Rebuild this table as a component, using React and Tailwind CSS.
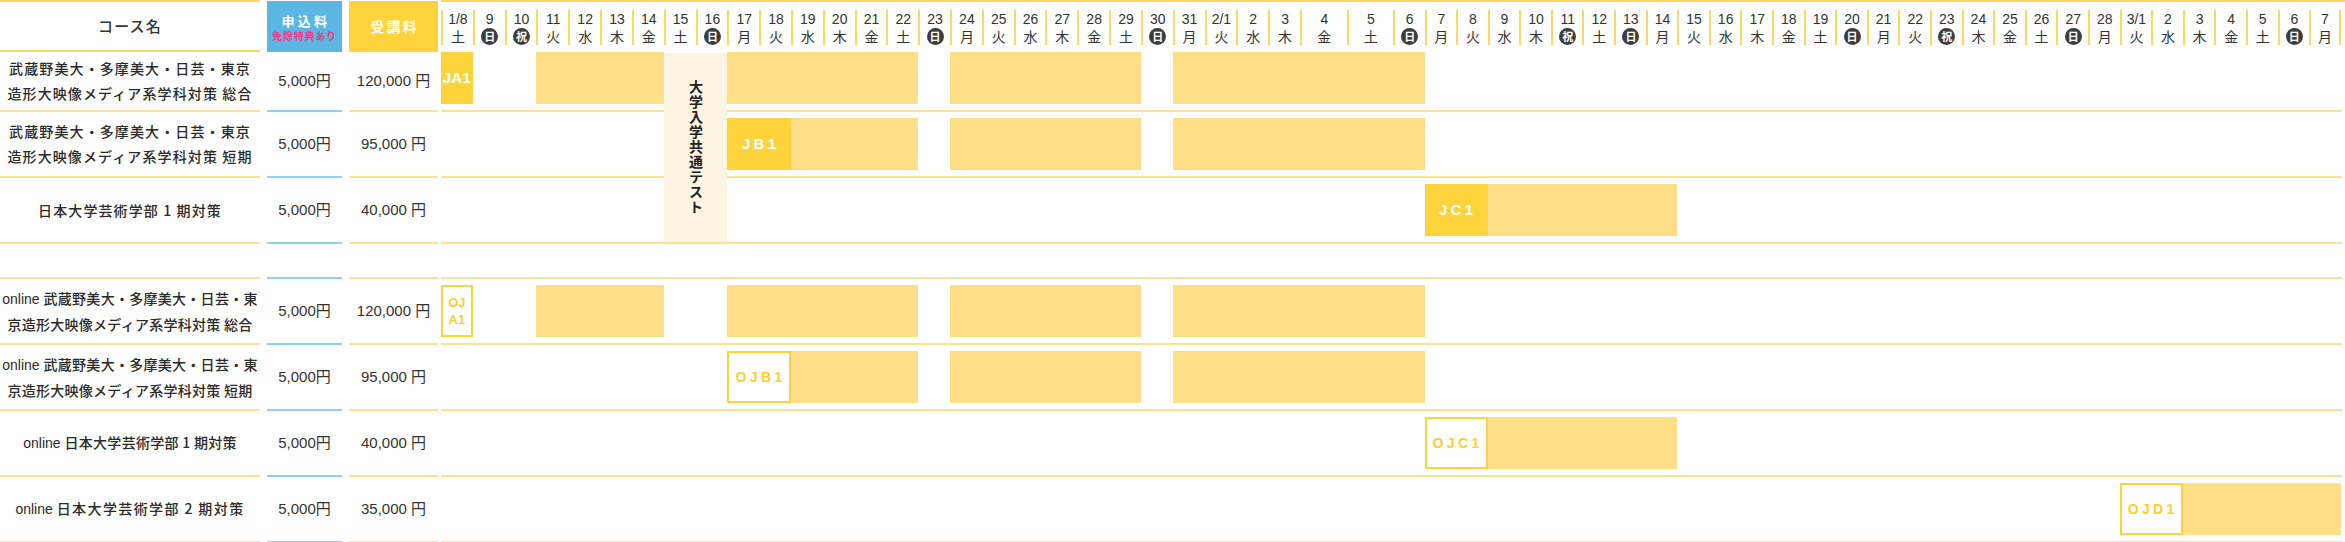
const days = [
  ['1/8', '土'], ['9', '日'], ['10', '祝'], ['11', '火'], ['12', '水'], ['13', '木'], ['14', '金'],
  ['15', '土'], ['16', '日'], ['17', '月'], ['18', '火'], ['19', '水'], ['20', '木'], ['21', '金'],
  ['22', '土'], ['23', '日'], ['24', '月'], ['25', '火'], ['26', '水'], ['27', '木'], ['28', '金'],
  ['29', '土'], ['30', '日'], ['31', '月'], ['2/1', '火'], ['2', '水'], ['3', '木'], ['4', '金'],
  ['5', '土'], ['6', '日'], ['7', '月'], ['8', '火'], ['9', '水'], ['10', '木'], ['11', '祝'],
  ['12', '土'], ['13', '日'], ['14', '月'], ['15', '火'], ['16', '水'], ['17', '木'], ['18', '金'],
  ['19', '土'], ['20', '日'], ['21', '月'], ['22', '火'], ['23', '祝'], ['24', '木'], ['25', '金'],
  ['26', '土'], ['27', '日'], ['28', '月'], ['3/1', '火'], ['2', '水'], ['3', '木'], ['4', '金'],
  ['5', '土'], ['6', '日'], ['7', '月'],
]

const gridCols = 'grid grid-cols-[repeat(27,31.815px)_46.7px_46.3px_repeat(30,31.6px)]'

const longBars = [
  { cls: 'col-start-4 col-end-8' },
  { cls: 'col-start-10 col-end-16' },
  { cls: 'col-start-17 col-end-23' },
  { cls: 'col-start-24 col-end-31' },
]

const rowsA = [
  {
    name: ['武蔵野美大・多摩美大・日芸・東京', '造形大映像メディア系学科対策 総合'],
    entry: '5,000円',
    fee: '120,000 円',
    first: true,
    bars: [{ cls: 'col-start-1 col-end-2', kind: 'solid', label: 'JA1', tight: true }, ...longBars],
  },
  {
    name: ['武蔵野美大・多摩美大・日芸・東京', '造形大映像メディア系学科対策 短期'],
    entry: '5,000円',
    fee: '95,000 円',
    bars: [
      { cls: 'col-start-10 col-end-12', kind: 'solid', label: 'JB1' },
      { cls: 'col-start-12 col-end-16' },
      { cls: 'col-start-17 col-end-23' },
      { cls: 'col-start-24 col-end-31' },
    ],
  },
  {
    name: ['日本大学芸術学部 1 期対策'],
    entry: '5,000円',
    fee: '40,000 円',
    bars: [
      { cls: 'col-start-31 col-end-33', kind: 'solid', label: 'JC1' },
      { cls: 'col-start-33 col-end-39' },
    ],
  },
]

const rowsB = [
  {
    online: true,
    name: ['武蔵野美大・多摩美大・日芸・東', '京造形大映像メディア系学科対策 総合'],
    entry: '5,000円',
    fee: '120,000 円',
    bars: [{ cls: 'col-start-1 col-end-2', kind: 'outline', label: 'OJA1', stacked: true }, ...longBars],
  },
  {
    online: true,
    name: ['武蔵野美大・多摩美大・日芸・東', '京造形大映像メディア系学科対策 短期'],
    entry: '5,000円',
    fee: '95,000 円',
    bars: [
      { cls: 'col-start-10 col-end-12', kind: 'outline', label: 'OJB1' },
      { cls: 'col-start-12 col-end-16' },
      { cls: 'col-start-17 col-end-23' },
      { cls: 'col-start-24 col-end-31' },
    ],
  },
  {
    online: true,
    name: ['日本大学芸術学部 1 期対策'],
    entry: '5,000円',
    fee: '40,000 円',
    bars: [
      { cls: 'col-start-31 col-end-33', kind: 'outline', label: 'OJC1' },
      { cls: 'col-start-33 col-end-39' },
    ],
  },
  {
    online: true,
    name: ['日本大学芸術学部 2 期対策'],
    entry: '5,000円',
    fee: '35,000 円',
    wide: true,
    bars: [
      { cls: 'col-start-53 col-end-55', kind: 'outline', label: 'OJD1' },
      { cls: 'col-start-55 col-end-60' },
    ],
  },
]

function DayHead({ date, wd, last }) {
  const marked = wd === '日' || wd === '祝'
  return (
    <div className="pt-[8px]">
      <div
        className={`flex h-[35px] flex-col items-center border-l-2 border-[#fdd866] ${last ? 'border-r-2' : ''}`}
      >
        <span className="font-['Liberation_Sans','Noto_Sans_CJK_JP',sans-serif] text-[14px] leading-[18px] text-[#333]">
          {date}
        </span>
        {marked ? (
          <span className="flex h-[17px] w-[17px] items-center justify-center rounded-full bg-[#3d3d3d] text-[11px] font-bold leading-none text-white">
            {wd}
          </span>
        ) : (
          <span className="text-[14px] leading-[17px] text-[#333]">{wd}</span>
        )}
      </div>
    </div>
  )
}

function Bar({ bar }) {
  if (bar.kind === 'solid') {
    return (
      <div
        className={`${bar.cls} row-start-1 flex items-center justify-center bg-[#fed33c] font-['Liberation_Sans',sans-serif] text-[15px] font-bold text-white ${
          bar.tight ? 'tracking-[0.02em]' : 'pl-[3px] tracking-[0.22em]'
        }`}
      >
        {bar.label}
      </div>
    )
  }
  if (bar.kind === 'outline') {
    return (
      <div
        className={`${bar.cls} row-start-1 flex items-center justify-center border-2 border-[#fed33c] bg-white font-['Liberation_Sans',sans-serif] font-bold text-[#fecf2e] ${
          bar.stacked ? 'text-[13px] leading-[17px]' : 'pl-[3px] text-[14px] tracking-[0.24em]'
        }`}
      >
        {bar.stacked ? (
          <span className="text-center">
            OJ
            <br />
            A1
          </span>
        ) : (
          bar.label
        )}
      </div>
    )
  }
  return <div className={`${bar.cls} row-start-1 bg-[#fede86]`} />
}

function CourseRow({ row }) {
  return (
    <div className={`flex ${row.first ? 'h-[60px]' : 'h-[66px]'}`}>
      <div className="flex w-[260px] items-center justify-center border-b-2 border-[#fde195] text-center text-[14px] font-medium leading-[25px] text-[#2a2a2a]">
        <div>
          {row.name.map((line, i) => (
            <div
              key={i}
              className={`whitespace-nowrap ${
                row.online ? (row.wide ? 'tracking-[0.1em]' : 'tracking-[0.02em]') : 'tracking-[0.08em]'
              }`}
            >
              {row.online && i === 0 && (
                <span className="font-['Liberation_Sans',sans-serif] tracking-normal">online </span>
              )}
              {line}
            </div>
          ))}
        </div>
      </div>
      <div className="ml-[7px] flex w-[75px] items-center justify-center border-b-2 border-[#93cff0] font-['Liberation_Sans','Noto_Sans_CJK_JP',sans-serif] text-[15px] text-[#333]">
        {row.entry}
      </div>
      <div className="ml-[7px] flex w-[89px] items-center justify-center border-b-2 border-[#fde195] font-['Liberation_Sans','Noto_Sans_CJK_JP',sans-serif] text-[15px] text-[#333]">
        {row.fee}
      </div>
      <div
        className={`ml-[3px] w-[1901px] border-b-2 border-[#fde195] ${row.first ? 'pb-[6px]' : 'py-[6px]'}`}
      >
        <div className={`${gridCols} h-full`}>
          {row.bars.map((bar, i) => (
            <Bar key={i} bar={bar} />
          ))}
        </div>
      </div>
    </div>
  )
}

export default function App() {
  return (
    <div className="w-[2345px] overflow-hidden bg-white font-['Noto_Sans_CJK_JP',sans-serif]">
      <div className="flex h-[52px]">
        <div className="flex w-[260px] items-center justify-center border-y-2 border-[#fdd866] text-[15px] font-medium tracking-[0.08em] text-[#333]">
          コース名
        </div>
        <div className="ml-[7px] mt-[1px] flex w-[75px] flex-col items-center justify-center bg-[#5cb6e3]">
          <span className="pl-[3px] text-[13px] font-bold leading-[17px] tracking-[0.25em] text-white">申込料</span>
          <span className="text-[10px] font-bold leading-[13px] tracking-[0.08em] text-[#ea3c86]">免除特典あり</span>
        </div>
        <div className="ml-[7px] mt-[1px] flex w-[89px] items-center justify-center bg-[#fed33c] pl-[2px] text-[14px] font-bold tracking-[0.15em] text-white">
          受講料
        </div>
        <div className="ml-[3px] w-[1904px] border-t-2 border-[#fdd866]">
          <div className={gridCols}>
            {days.map(([d, w], i) => (
              <DayHead key={i} date={d} wd={w} last={i === days.length - 1} />
            ))}
          </div>
        </div>
      </div>

      <div className="relative">
        {rowsA.map((row, i) => (
          <CourseRow key={i} row={row} />
        ))}
        <div className="absolute left-[664px] top-[1px] flex h-[189px] w-[63px] items-center justify-center bg-[#fdf5e1]">
          <span className="text-[14px] font-bold tracking-[1px] text-[#222] [writing-mode:vertical-rl]">
            大学入学共通テスト
          </span>
        </div>
      </div>

      <div className="flex h-[35px]">
        <div className="w-[260px] border-b-2 border-[#fde195]" />
        <div className="ml-[7px] w-[75px] border-b-2 border-[#93cff0]" />
        <div className="ml-[7px] w-[89px] border-b-2 border-[#fde195]" />
        <div className="ml-[3px] w-[1901px] border-b-2 border-[#fde195]" />
      </div>

      {rowsB.map((row, i) => (
        <CourseRow key={i} row={row} />
      ))}
    </div>
  )
}
